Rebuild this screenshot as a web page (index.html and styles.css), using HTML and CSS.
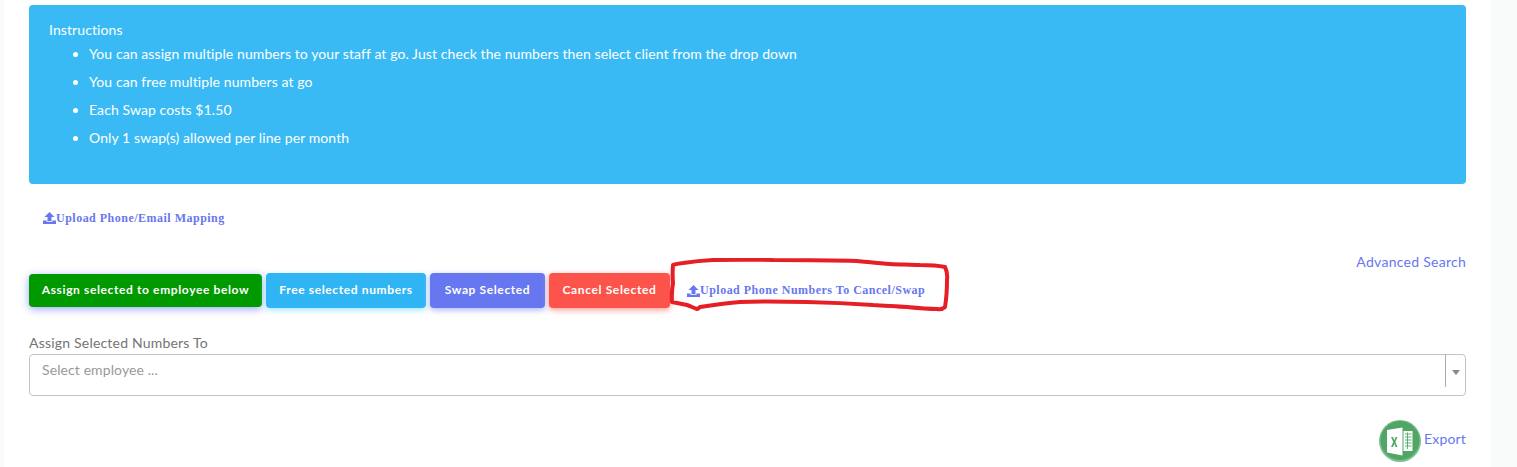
FILE: index.html
```html
<!DOCTYPE html>
<html lang="en">
<head>
<meta charset="utf-8">
<title>Numbers</title>
<link rel="stylesheet" href="styles.css">
</head>
<body>
<main class="card">
  <section class="alert">
    <div class="alert-title">Instructions</div>
    <ul class="alert-list">
      <li>You can assign multiple numbers to your staff at go. Just check the numbers then select client from the drop down</li>
      <li>You can free multiple numbers at go</li>
      <li>Each Swap costs $1.50</li>
      <li>Only 1 swap(s) allowed per line per month</li>
    </ul>
  </section>
  <a class="upload upload-top" href="#"><svg class="upload-icon" viewBox="0 0 13 12"><path d="M6.5 0 11.500 5H8.500V9H4.500V5H1.500Z"/><path d="M0 8.500H3.500V9.800H9.500V8.500H13V12H0Z"/></svg>Upload Phone/Email Mapping</a>
  <div class="search-row"><a class="link" href="#">Advanced Search</a></div>
  <div class="actions">
    <button class="btn btn-green">Assign selected to employee below</button>
    <button class="btn btn-blue">Free selected numbers</button>
    <button class="btn btn-indigo">Swap Selected</button>
    <button class="btn btn-red">Cancel Selected</button>
    <a class="upload upload-inline" href="#"><svg class="upload-icon" viewBox="0 0 13 12"><path d="M6.5 0 11.500 5H8.500V9H4.500V5H1.500Z"/><path d="M0 8.500H3.500V9.800H9.500V8.500H13V12H0Z"/></svg>Upload Phone Numbers To Cancel/Swap</a>
  </div>
  <label class="field-label">Assign Selected Numbers To</label>
  <div class="select">
    <span class="select-text">Select employee ...</span>
    <span class="select-arrow"><i class="caret"></i></span>
  </div>
  <div class="export-row">
    <svg class="excel" viewBox="0 0 42 42">
      <circle cx="21" cy="21" r="21" fill="#7fbf90"/>
      <circle cx="21" cy="20.500" r="19.500" fill="#4fa665"/>
      <path d="M8 10 23.500 7.500V35.500L8 32.500Z" fill="#fff"/>
      <path d="M24.500 11H33.500V31H24.500Z" fill="#fff"/>
      <path d="M26 14H32.500M26 17H32.500M26 20H32.500M26 23H32.500M26 26H32.500M28.500 12.500V29" stroke="#4fa665" stroke-width="0.900" fill="none"/>
      <path d="M12 17H14L15.300 20.300 16.600 17H18.500L16.300 22 18.500 27H16.600L15.300 23.700 14 27H12L14.300 22Z" fill="#4fa665"/>
    </svg>
    <a class="link link-export" href="#">Export</a>
  </div>
  <svg class="scribble" viewBox="0 0 284 56" aria-hidden="true">
    <path d="M5 7C8 6 11 5.500 15 5C25 3.500 35 2.500 45 2C65 1.500 85 1.500 105 2C135 2 160 2 189 3C200 4 211 5.500 222 6C232 6.500 242 6.500 252 7C260 7 270 7.500 277 9C279 13 279.500 18 279 22C279 31 278.500 40 277 49C275 51 272 51.500 269 51C259 51 249 50 239 49C228 48.500 216 47.500 205 47C183 45.500 161 44.500 139 44C117 43.500 94 43 72 44C58 45 45 47 32 49C31 50 30 51 29 51C26 50 22 48 19 47C14 46 9 45 4 44C3.500 38 4 31 5 25C4.500 19 4.500 13 5 7Z" fill="none" stroke="#e61e25" stroke-width="4" stroke-linejoin="round"/>
  </svg>
</main>
</body>
</html>
```
FILE: styles.css
```css
* { box-sizing: border-box; }
html, body { height: 100%; }
body {
  margin: 0;
  background: #f9fbfb;
  font-family: "Lato", "Noto Sans", sans-serif;
  color: #666;
  overflow: hidden;
}
.card {
  position: relative;
  width: 1487px;
  height: 467px;
  margin-left: 4px;
  padding: 5px 25px 0;
  background: #fff;
}
.alert {
  height: 179px;
  padding: 14px 20px;
  background: #3abaf4;
  border-radius: 4px;
  color: #fff;
  font-size: 14px;
  letter-spacing: 0.09px;
}
.alert-title { line-height: 21px; }
.alert-list { margin: 0; padding-left: 40px; }
.alert-list li { height: 28px; line-height: 28px; }
.upload {
  display: inline-flex;
  align-items: center;
  color: #6777ef;
  font-family: "Liberation Serif", serif;
  font-weight: 700;
  font-size: 12px;
  letter-spacing: 0.49px;
  text-decoration: none;
}
.upload-icon { width: 13px; height: 12px; fill: #6777ef; flex: none; }
.upload-top { height: 16px; margin: 26px 0 0 14px; }
.search-row {
  display: flex;
  justify-content: flex-end;
  margin-top: 26px;
  height: 17px;
  line-height: 17px;
}
.link { color: #6777ef; font-size: 14px; letter-spacing: 0.27px; text-decoration: none; }
.link-export { padding-bottom: 5px; letter-spacing: 0.17px; }
.actions {
  display: flex;
  align-items: center;
  gap: 4px;
  height: 35px;
  margin-top: 3px;
}
.btn {
  height: 35px;
  padding: 0 0 3px;
  border: 0;
  border-radius: 4px;
  color: #fff;
  font-family: inherit;
  font-weight: 700;
  font-size: 12px;
  letter-spacing: 0.62px;
}
.btn-green { height: 33px; background: #009900; box-shadow: 0 2px 8px #9aa5f5; width: 233px; }
.btn-blue { background: #30b5f4; box-shadow: 0 2px 6px #a5e3fb; width: 160px; }
.btn-indigo { background: #6777ef; box-shadow: 0 2px 6px #acb5f6; width: 115px; }
.btn-red { background: #fc544b; box-shadow: 0 2px 6px #fd9b96; width: 121px; }
.upload-inline { margin-left: 13px; }
.field-label {
  display: block;
  margin-top: 26px;
  font-size: 14px;
  line-height: 17px;
  letter-spacing: 0.2px;
  color: #747474;
}
.select {
  display: flex;
  justify-content: space-between;
  height: 42px;
  margin-top: 3px;
  border: 1px solid #c4c4c4;
  border-radius: 4px;
}
.select-text { padding: 6px 0 0 12px; font-size: 14px; line-height: 17px; letter-spacing: 0.1px; color: #999; }
.select-arrow {
  display: flex;
  justify-content: center;
  width: 20px;
  height: 32px;
  padding-top: 15px;
  border-left: 1px solid #aaa;
}
.caret {
  width: 0;
  height: 0;
  border-style: solid;
  border-width: 5px 4px 0;
  border-color: #888 transparent transparent;
}
.export-row {
  display: flex;
  justify-content: flex-end;
  align-items: center;
  gap: 3px;
  margin-top: 24px;
  height: 42px;
}
.excel { width: 42px; height: 42px; flex: none; }
.scribble {
  position: absolute;
  left: 664px;
  top: 258px;
  width: 284px;
  height: 56px;
}
```
